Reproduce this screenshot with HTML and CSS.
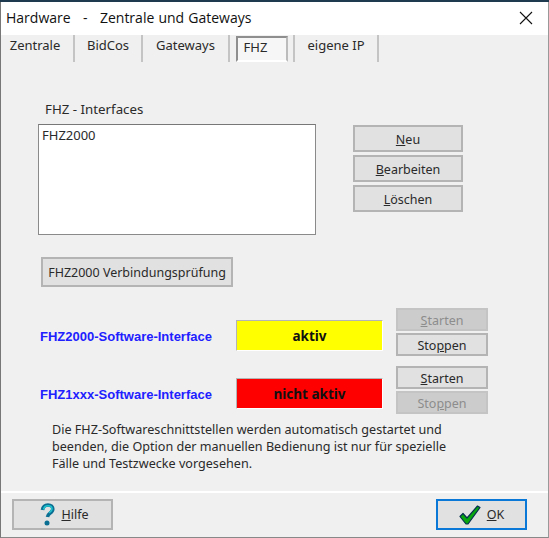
FILE: index.html
```html
<!DOCTYPE html>
<html lang="de">
<head>
    <meta charset="UTF-8">
    <title>Hardware - Zentrale und Gateways</title>
    <link rel="stylesheet" href="styles.css">
</head>
<body>
<div class="window">
    <div class="titlebar">
        <span class="title">Hardware &nbsp; - &nbsp; Zentrale und Gateways</span>
        <svg class="close" width="14" height="14" viewBox="0 0 14 14"><path d="M1 1L13 13M13 1L1 13" stroke="#111" stroke-width="1.1" fill="none"/></svg>
    </div>

    <div class="tabs">
        <div class="tab t1">Zentrale</div>
        <div class="tab t2">BidCos</div>
        <div class="tab t3">Gateways</div>
        <div class="tab t4"><span class="tab-active">FHZ</span></div>
        <div class="tab t5">eigene IP</div>
    </div>

    <div class="content">
        <div class="interfaces">
            <div class="list-col">
                <div class="list-label">FHZ - Interfaces</div>
                <div class="listbox">FHZ2000</div>
            </div>
            <div class="list-buttons">
                <button class="btn"><u>N</u>eu</button>
                <button class="btn"><u>B</u>earbeiten</button>
                <button class="btn"><u>L</u>öschen</button>
            </div>
        </div>

        <button class="btn check-btn">FHZ2000 Verbindungsprüfung</button>

        <div class="status-row first">
            <div class="status-label">FHZ2000-Software-Interface</div>
            <div class="status-box yellow">aktiv</div>
            <div class="status-buttons">
                <button class="btn disabled"><u>S</u>tarten</button>
                <button class="btn">Sto<u>p</u>pen</button>
            </div>
        </div>

        <div class="status-row second">
            <div class="status-label">FHZ1xxx-Software-Interface</div>
            <div class="status-box red">nicht aktiv</div>
            <div class="status-buttons">
                <button class="btn"><u>S</u>tarten</button>
                <button class="btn disabled">Sto<u>p</u>pen</button>
            </div>
        </div>

        <p class="note">Die FHZ-Softwareschnittstellen werden automatisch gestartet und<br>beenden, die Option der manuellen Bedienung ist nur für spezielle<br>Fälle und Testzwecke vorgesehen.</p>
    </div>

    <div class="footer">
        <button class="btn help-btn">
            <svg width="15" height="24" viewBox="0 0 15 24"><path d="M2.500 7C3 3.500 5.500 2 8 2c3 0 4.800 1.800 4.800 4 0 2.400-1.800 3.500-3.300 4.600-1.300 1-1.800 1.800-2 3.400" fill="none" stroke="#0b6f93" stroke-width="3.600"/><circle cx="7" cy="20" r="2.500" fill="#0b6f93"/><path d="M3.500 6.500C4 4 6 2.800 8 2.800c2.400 0 4 1.300 4 3.200 0 1.800-1.300 2.700-2.800 3.800" fill="none" stroke="#1fc4cf" stroke-width="1.600"/></svg>
            <span><u>H</u>ilfe</span>
        </button>
        <button class="btn ok-btn">
            <svg width="22" height="20" viewBox="0 0 22 20"><path d="M1 11.500L4 8.500L8 13L18.500 1L21 2.500L9 19H7Z" fill="#0aa80f" stroke="#06304f" stroke-width="1.200" stroke-linejoin="round"/></svg>
            <span><u>O</u>K</span>
        </button>
    </div>
</div>
</body>
</html>
```

FILE: styles.css
```css
* {
    margin: 0;
    padding: 0;
    box-sizing: border-box;
}
body {
    width: 549px;
    height: 538px;
    overflow: hidden;
    background: #1d3a4f;
    font-family: "Noto Sans", sans-serif;
    font-size: 12.5px;
    color: #2a2a2a;
}
.window {
    margin-top: 2px;
    width: 549px;
    height: 536px;
    display: flex;
    flex-direction: column;
    background: #f0f0f0;
    border-left: 1px solid #777;
    border-right: 1px solid #999;
    border-bottom: 1px solid #888;
}
.titlebar {
    height: 33px;
    background: #fff;
    display: flex;
    align-items: center;
    justify-content: space-between;
    padding: 0 15px 2px 5px;
}
.title {
    font-family: "Open Sans", sans-serif;
    font-size: 14px;
    word-spacing: 0.5px;
    color: #111;
}
.tabs {
    display: flex;
    height: 27px;
    font-size: 13px;
}
.tab {
    border-right: 2px solid #c4c4c4;
    display: flex;
    align-items: center;
    justify-content: center;
    padding-bottom: 7px;
}
.t1 { width: 74px; padding-right: 4px; }
.t2 { width: 68px; }
.t3 { width: 87px; }
.t4 { width: 65px; padding-bottom: 0; }
.t5 { width: 84px; }
.tab-active {
    width: 52px;
    height: 26px;
    padding: 0 0 0 6px;
    line-height: 18px;
    border: 2px solid #8e8e8e;
    border-right-color: #bbb;
    border-bottom-color: #fff;
    background: #f6f6f6;
}
.content {
    flex: 1;
}
.btn {
    display: block;
    background: #e1e1e1;
    border: 2px solid #b4b4b4;
    font-family: "Noto Sans", sans-serif;
    font-size: 12.5px;
    color: #2a2a2a;
}
.interfaces {
    display: flex;
    margin-top: 37px;
}
.list-col {
    margin-left: 37px;
    width: 278px;
}
.list-label {
    height: 25px;
    margin-left: 7px;
    padding-top: 1px;
    font-size: 13.300px;
}
.listbox {
    height: 111px;
    background: #fff;
    border: 1px solid #8a8a8a;
    border-top-color: #777;
    padding: 1px 3px;
    font-size: 13px;
}
.list-buttons {
    margin-left: 37px;
    padding-top: 26px;
    display: flex;
    flex-direction: column;
    gap: 3px;
}
.list-buttons .btn {
    width: 110px;
    height: 27px;
    padding-top: 2px;
}
.check-btn {
    margin: 22px 0 0 40px;
    width: 192px;
    height: 30px;
}
.status-row {
    display: flex;
    align-items: center;
}
.first { margin-top: 21px; }
.second { margin-top: 10px; }
.status-label {
    margin-left: 39px;
    width: 196px;
    margin-top: 8px;
    font-family: "Liberation Sans", sans-serif;
    font-size: 13px;
    font-weight: bold;
    color: #2020ff;
}
.status-box {
    width: 147px;
    height: 31px;
    margin-top: 6px;
    padding-top: 2px;
    display: flex;
    align-items: center;
    justify-content: center;
    border-top: 1px solid #b4b4b4;
    border-left: 1px solid #b4b4b4;
    border-right: 1px solid #fff;
    border-bottom: 1px solid #fff;
    font-size: 13.500px;
    font-weight: bold;
    color: #111;
}
.yellow { background: #ffff00; }
.red { background: #ff0000; }
.status-buttons {
    margin-left: 13px;
    display: flex;
    flex-direction: column;
    gap: 2px;
}
.status-buttons .btn {
    width: 92px;
    height: 23px;
    line-height: 16px;
    padding-top: 2px;
}
.btn.disabled {
    background: #cccccc;
    border-color: #c4c4c4;
    color: #8d8d8d;
}
.note {
    margin: 7px 0 0 51px;
    line-height: 17px;
    font-size: 12.600px;
}
.footer {
    height: 46px;
    border-top: 2px solid #fff;
    display: flex;
    justify-content: space-between;
    align-items: flex-start;
    padding: 6px 21px 0 11px;
}
.footer .btn {
    height: 31px;
    display: flex;
    align-items: center;
    justify-content: center;
    gap: 6px;
}
.help-btn { width: 101px; padding-left: 4px; }
.ok-btn {
    width: 91px;
    border-color: #0a78d7 !important;
}
```
